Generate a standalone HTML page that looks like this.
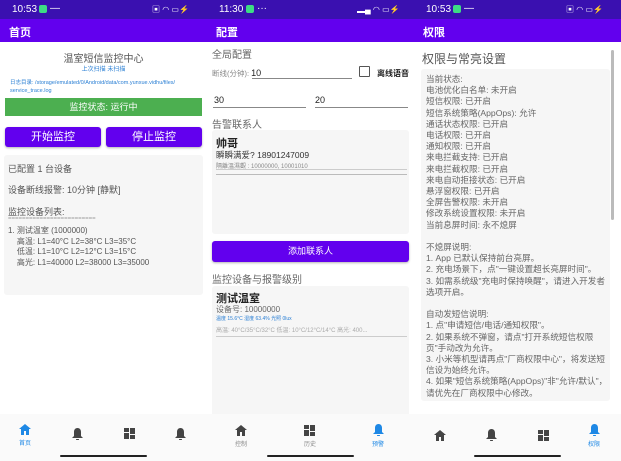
<!DOCTYPE html>
<html><head><meta charset="utf-8"><style>
*{margin:0;padding:0;box-sizing:border-box}
body{width:621px;height:461px;overflow:hidden;background:#fff;font-family:"Liberation Sans","Noto Sans CJK SC",sans-serif;position:relative}
.p{position:absolute;top:0;width:207px;height:461px;background:#fff;overflow:hidden}
.sb{position:absolute;left:0;top:0;width:207px;height:19px;background:#3a10b0;color:#fff;font-size:10px}
.sb .t{position:absolute;left:12px;top:4px}
.sb .g{position:absolute;left:39px;top:5px;width:8px;height:8px;background:#3ddc84;border-radius:2px}
.tb{position:absolute;left:0;top:19px;width:207px;height:23px;background:#6200ee;color:#fff;font-size:11px;font-weight:bold;padding:5px 0 0 9px}
.a{position:absolute;white-space:nowrap}
.btn{position:absolute;background:#6200ee;color:#fff;text-align:center;border-radius:3px;box-shadow:0 1px 2px rgba(0,0,0,.3)}
.card{position:absolute;background:#f6f6f6;border-radius:3px}
.nav{position:absolute;left:0;top:414px;width:207px;height:47px;background:#fafafa}
.hl{position:absolute;left:60px;top:455px;width:87px;height:2px;background:#222;border-radius:1px}
.ul{position:absolute;height:1px;background:#888}
.g9{font-size:9px;color:#555}
</style></head><body>

<!-- Panel 1 -->
<div class="p" style="left:0">
<div class="sb"><span class="t">10:53</span><span class="g"></span><span class="a" style="left:50px;top:3px">—</span><span class="a" style="left:152px;top:4px;font-size:8px">▣ ◠ ▭⚡</span></div>
<div class="tb">首页</div>
<div class="a" style="left:0;width:207px;text-align:center;top:50px;font-size:10px;color:#555">温室短信监控中心</div>
<div class="a" style="left:0;width:207px;text-align:center;top:64px;font-size:6px;color:#2a7fd4">上次扫描 未扫描</div>
<div class="a" style="left:10px;top:79px;font-size:5.5px;color:#2a7fd4;white-space:normal;width:190px;line-height:8px">日志目录: /storage/emulated/0/Android/data/com.yunxue.vidhu/files/ service_trace.log</div>
<div class="a" style="left:5px;top:98px;width:197px;height:18px;background:#4caf50;color:#fff;font-size:9px;text-align:center;line-height:18px">监控状态: 运行中</div>
<div class="btn" style="left:5px;top:127px;width:96px;height:20px;font-size:11px;line-height:20px">开始监控</div>
<div class="btn" style="left:106px;top:127px;width:96px;height:20px;font-size:11px;line-height:20px">停止监控</div>
<div class="card" style="left:4px;top:155px;width:199px;height:140px"></div>
<div class="a g9" style="left:8px;top:162px">已配置 1 台设备</div>
<div class="a g9" style="left:8px;top:183px">设备断线报警: 10分钟 [静默]</div>
<div class="a g9" style="left:8px;top:205px">监控设备列表:</div>
<div class="a" style="left:8px;top:216px;font-size:6px;color:#999">=========================</div>
<div class="a g9" style="left:8px;top:226px;font-size:8px;line-height:10.6px">1. 测试温室 (1000000)<br>&nbsp;&nbsp;&nbsp;&nbsp;高温: L1=40°C L2=38°C L3=35°C<br>&nbsp;&nbsp;&nbsp;&nbsp;低温: L1=10°C L2=12°C L3=15°C<br>&nbsp;&nbsp;&nbsp;&nbsp;高光: L1=40000 L2=38000 L3=35000</div>
<div class="nav"></div>
<svg class="a" style="left:19px;top:424px" width="12" height="11" viewBox="0 0 12 11"><path d="M6 0L0 5h2v6h3V7h2v4h3V5h2z" fill="#1e88e5"/></svg>
<div class="a" style="left:19px;top:438px;font-size:6px;color:#1e88e5">首页</div>
<svg class="a" style="left:72px;top:428px" width="11" height="12" viewBox="0 0 11 12"><path d="M5.5 0C3 0 2 2 2 4v4L0 10h11L9 8V4C9 2 8 0 5.5 0zM4 11h3a1.5 1.5 0 01-3 0z" fill="#444"/></svg>
<svg class="a" style="left:124px;top:428px" width="11" height="11" viewBox="0 0 11 11"><path d="M0 0h5v4H0zM6 0h5v6H6zM0 5h5v6H0zM6 7h5v4H6z" fill="#444"/></svg>
<svg class="a" style="left:175px;top:428px" width="11" height="12" viewBox="0 0 11 12"><path d="M5.5 0C3 0 2 2 2 4v4L0 10h11L9 8V4C9 2 8 0 5.5 0zM4 11h3a1.5 1.5 0 01-3 0z" fill="#444"/></svg>
<div class="hl"></div>
</div>

<!-- Panel 2 -->
<div class="p" style="left:207px">
<div class="sb"><span class="t">11:30</span><span class="g"></span><span class="a" style="left:50px;top:3px">···</span><span class="a" style="left:150px;top:4px;font-size:8px">▂▄ ◠ ▭⚡</span></div>
<div class="tb">配置</div>
<div class="a" style="left:5px;top:46px;font-size:10px;color:#666">全局配置</div>
<div class="a" style="left:5px;top:68px;font-size:7.5px;color:#888">断线(分钟): <span style="color:#222;font-size:9px">10</span></div>
<div class="ul" style="left:45px;top:78px;width:100px"></div>
<div class="a" style="left:152px;top:66px;width:11px;height:11px;border:1.5px solid #555;border-radius:1px"></div>
<div class="a" style="left:170px;top:68px;font-size:8px;color:#222;font-weight:bold">离线语音</div>
<div class="a" style="left:7px;top:95px;font-size:9px;color:#222">30</div>
<div class="ul" style="left:6px;top:107px;width:93px"></div>
<div class="a" style="left:108px;top:95px;font-size:9px;color:#222">20</div>
<div class="ul" style="left:108px;top:107px;width:93px"></div>
<div class="a" style="left:5px;top:116px;font-size:10px;color:#666">告警联系人</div>
<div class="card" style="left:5px;top:130px;width:197px;height:104px"></div>
<div class="a" style="left:9px;top:135px;font-size:11px;font-weight:bold;color:#222">帅哥</div>
<div class="a" style="left:9px;top:149px;font-size:8.5px;color:#333">瞬瞬满爱? 18901247009</div>
<div class="a" style="left:9px;top:161px;font-size:6px;color:#888">隔離溫濕觀 : 10000000, 10001010</div>
<div class="ul" style="left:9px;top:169px;width:191px;background:#ccc"></div>
<div class="ul" style="left:9px;top:174px;width:191px;background:#bbb"></div>
<div class="btn" style="left:5px;top:241px;width:197px;height:21px;font-size:9px;line-height:21px">添加联系人</div>
<div class="a" style="left:5px;top:271px;font-size:10px;color:#666">监控设备与报警级别</div>
<div class="card" style="left:5px;top:286px;width:197px;height:134px"></div>
<div class="a" style="left:9px;top:290px;font-size:11px;font-weight:bold;color:#222">测试温室</div>
<div class="a" style="left:9px;top:304px;font-size:8px;color:#666">设备号: 10000000</div>
<div class="a" style="left:9px;top:315px;font-size:5px;color:#2a7fd4">温度 15.6°C 湿度 63.4% 光照 0lux</div>
<div class="a" style="left:9px;top:325px;font-size:6px;color:#aaa">高温: 40°C/35°C/32°C 低温: 10°C/12°C/14°C 高光: 400...</div>
<div class="ul" style="left:9px;top:336px;width:191px;background:#ccc"></div>
<div class="nav"></div>
<svg class="a" style="left:28px;top:425px" width="12" height="11" viewBox="0 0 12 11"><path d="M6 0L0 5h2v6h3V7h2v4h3V5h2z" fill="#444"/></svg>
<div class="a" style="left:28px;top:439px;font-size:6px;color:#888">控制</div>
<svg class="a" style="left:97px;top:425px" width="11" height="11" viewBox="0 0 11 11"><path d="M0 0h5v4H0zM6 0h5v6H6zM0 5h5v6H0zM6 7h5v4H6z" fill="#444"/></svg>
<div class="a" style="left:97px;top:439px;font-size:6px;color:#888">历史</div>
<svg class="a" style="left:166px;top:424px" width="11" height="12" viewBox="0 0 11 12"><path d="M5.5 0C3 0 2 2 2 4v4L0 10h11L9 8V4C9 2 8 0 5.5 0zM4 11h3a1.5 1.5 0 01-3 0z" fill="#1e88e5"/></svg>
<div class="a" style="left:165px;top:439px;font-size:6px;color:#1e88e5">预警</div>
<div class="hl"></div>
</div>

<!-- Panel 3 -->
<div class="p" style="left:414px">
<div class="sb"><span class="t">10:53</span><span class="g"></span><span class="a" style="left:50px;top:3px">—</span><span class="a" style="left:152px;top:4px;font-size:8px">▣ ◠ ▭⚡</span></div>
<div class="tb">权限</div>
<div class="a" style="left:8px;top:50px;font-size:12px;color:#555">权限与常亮设置</div>
<div class="a" style="left:197px;top:50px;width:3px;height:170px;background:#bbb;border-radius:2px"></div>
<div class="card" style="left:7px;top:69px;width:189px;height:332px"></div>
<div class="a" style="left:12px;top:74px;font-size:8.6px;color:#666;line-height:11.2px;white-space:normal;width:185px">当前状态:<br>电池优化白名单: 未开启<br>短信权限: 已开启<br>短信系统策略(AppOps): 允许<br>通话状态权限: 已开启<br>电话权限: 已开启<br>通知权限: 已开启<br>来电拦截支持: 已开启<br>来电拦截权限: 已开启<br>来电自动拒接状态: 已开启<br>悬浮窗权限: 已开启<br>全屏告警权限: 未开启<br>修改系统设置权限: 未开启<br>当前息屏时间: 永不熄屏<br><br>不熄屏说明:<br>1. App 已默认保持前台亮屏。<br>2. 充电场景下，点"一键设置超长亮屏时间"。<br>3. 如需系统级"充电时保持唤醒"，请进入开发者选项开启。<br><br>自动发短信说明:<br>1. 点"申请短信/电话/通知权限"。<br>2. 如果系统不弹窗，请点"打开系统短信权限页"手动改为允许。<br>3. 小米等机型请再点"厂商权限中心"，将发送短信设为始终允许。<br>4. 如果"短信系统策略(AppOps)"非"允许/默认"，请优先在厂商权限中心修改。</div>
<div class="nav"></div>
<svg class="a" style="left:20px;top:430px" width="12" height="11" viewBox="0 0 12 11"><path d="M6 0L0 5h2v6h3V7h2v4h3V5h2z" fill="#444"/></svg>
<svg class="a" style="left:72px;top:429px" width="11" height="12" viewBox="0 0 11 12"><path d="M5.5 0C3 0 2 2 2 4v4L0 10h11L9 8V4C9 2 8 0 5.5 0zM4 11h3a1.5 1.5 0 01-3 0z" fill="#444"/></svg>
<svg class="a" style="left:124px;top:430px" width="11" height="11" viewBox="0 0 11 11"><path d="M0 0h5v4H0zM6 0h5v6H6zM0 5h5v6H0zM6 7h5v4H6z" fill="#444"/></svg>
<svg class="a" style="left:175px;top:424px" width="11" height="12" viewBox="0 0 11 12"><path d="M5.5 0C3 0 2 2 2 4v4L0 10h11L9 8V4C9 2 8 0 5.5 0zM4 11h3a1.5 1.5 0 01-3 0z" fill="#1e88e5"/></svg>
<div class="a" style="left:174px;top:439px;font-size:6px;color:#1e88e5">权限</div>
<div class="hl"></div>
</div>
</body></html>
